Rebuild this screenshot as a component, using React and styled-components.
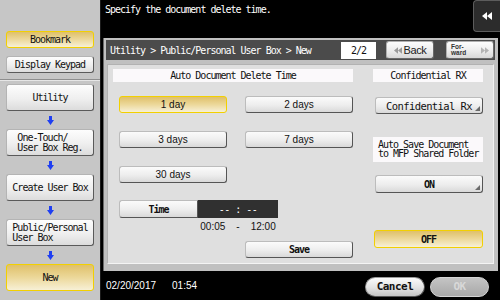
import React from "react";
import styled, { createGlobalStyle, css } from "styled-components";

const MONO = `"DejaVu Sans Mono", "Liberation Mono", monospace`;
const SANS = `"Liberation Sans", Arial, sans-serif`;

const GlobalStyle = createGlobalStyle`
  * { box-sizing: border-box; }
  html, body { margin: 0; padding: 0; background: #000; }
  body { width: 500px; height: 300px; overflow: hidden; font-family: ${MONO}; }
  button { font: inherit; padding: 0; margin: 0; cursor: pointer; }
`;

const Screen = styled.div`
  display: flex;
  width: 500px;
  height: 300px;
  background: #000;
  overflow: hidden;
`;

const Sidebar = styled.aside`
  flex: none;
  width: 101px;
  background: #c6c6c6;
  border-right: 1px solid #1c1c1c;
  display: flex;
  flex-direction: column;
`;

const SideTop = styled.div`
  height: 80px;
  padding: 31px 6px 0 6px;
  display: flex;
  flex-direction: column;
  gap: 8px;
  border-bottom: 1px solid #8e8e8e;
  box-shadow: 0 1px 0 #e6e6e6;
`;

const SideNav = styled.div`
  padding: 4px 6px 0 6px;
  display: flex;
  flex-direction: column;
`;

const yellow = css`
  border: 1.5px solid #f2d000;
  background: linear-gradient(#dfc06a, #ecd89a 50%, #f7f0d6);
`;

const SideButton = styled.button`
  flex: none;
  width: 100%;
  height: ${(p) => p.$h}px;
  display: flex;
  align-items: center;
  justify-content: center;
  font-family: ${MONO};
  font-size: 10px;
  letter-spacing: -1px;
  line-height: 10px;
  color: #111;
  border-radius: 3px;
  border: 1px solid #b4b4b4;
  border-right-color: #5a5a5a;
  border-bottom-color: #5a5a5a;
  background: linear-gradient(#fdfdfd, #efefef 55%, #dcdcdc);
  ${(p) => p.$active && yellow}
`;

const Label = styled.span`
  text-align: left;
  white-space: pre-line;
`;

const ArrowSlot = styled.div`
  height: 18px;
  flex: none;
  display: flex;
  align-items: center;
  justify-content: center;
`;

const Main = styled.main`
  flex: 1;
  display: flex;
  flex-direction: column;
  min-width: 0;
`;

const TopBar = styled.div`
  height: 38px;
  flex: none;
  display: flex;
  justify-content: space-between;
  align-items: flex-start;
`;

const Message = styled.div`
  color: #fff;
  font-size: 10px;
  letter-spacing: -1px;
  padding: 4px 0 0 4px;
`;

const CornerButton = styled.button`
  width: 27px;
  height: 32px;
  background: #2c2c2c;
  border: 1px solid #5c5c5c;
  border-right: none;
  border-radius: 4px 0 0 4px;
  display: flex;
  align-items: center;
  justify-content: center;
`;

const Panel = styled.section`
  flex: none;
  height: 233px;
  width: 395px;
  margin-left: 2px;
  background: #c0c0c0;
  border-left: 1px solid #6a6a6a;
  padding: 2px 3px 2px 2px;
  display: flex;
  flex-direction: column;
`;

const Header = styled.div`
  height: 20px;
  flex: none;
  background: #4b4b4b;
  display: flex;
  align-items: center;
  padding: 0 1px 0 4px;
`;

const PathText = styled.div`
  flex: 1;
  color: #fff;
  font-size: 10px;
  letter-spacing: -1px;
`;

const PageBox = styled.div`
  width: 35px;
  height: 17px;
  background: #fff;
  margin-right: 10px;
  display: flex;
  align-items: center;
  justify-content: center;
  font-size: 10px;
  letter-spacing: -1px;
  color: #111;
`;

const NavButton = styled.button`
  width: 48px;
  height: 18px;
  margin-left: ${(p) => p.$ml || 0}px;
  border-radius: 3px;
  border: 1px solid #b0b0b0;
  border-right-color: #6a6a6a;
  border-bottom-color: #6a6a6a;
  background: linear-gradient(#fdfdfd, #ececec 55%, #d8d8d8);
  display: flex;
  align-items: center;
  justify-content: ${(p) => p.$justify || "center"};
  gap: 2px;
  padding: 0 4px;
`;

const BackText = styled.span`
  font-family: ${SANS};
  font-size: 11px;
  letter-spacing: -0.4px;
  color: #222;
`;

const FwdText = styled.span`
  font-family: ${SANS};
  font-size: 6.5px;
  font-weight: bold;
  line-height: 6px;
  color: #333;
  white-space: pre-line;
  text-align: left;
`;

const Body = styled.div`
  flex: 1;
  display: flex;
  padding: 4px 1px 5px 1px;
`;

const Inner = styled.div`
  flex: 1;
  background: #dfdfdf;
  border-top: 1px solid #b2b2b2;
  border-left: 1px solid #b2b2b2;
  border-right: 1px solid #f0f0f0;
  border-bottom: 1px solid #f4f4f4;
  display: flex;
  gap: 20px;
  padding: 4px 5px 0 5px;
`;

const Column = styled.div`
  width: ${(p) => p.$w}px;
  flex: none;
  display: flex;
  flex-direction: column;
`;

const Strip = styled.div`
  height: 13px;
  flex: none;
  background: #fbf9fb;
  display: flex;
  align-items: center;
  justify-content: center;
  font-size: 10px;
  letter-spacing: -1px;
  color: #111;
`;

const DayGrid = styled.div`
  margin-top: 14px;
  padding-left: 6px;
  display: grid;
  grid-template-columns: 108px 108px;
  column-gap: 18px;
  row-gap: 18px;
`;

const PanelButton = styled.button`
  position: relative;
  width: ${(p) => p.$w || 108}px;
  height: ${(p) => p.$h || 17}px;
  flex: none;
  margin-top: ${(p) => p.$mt || 0}px;
  margin-left: ${(p) => p.$ml || 0}px;
  border-radius: ${(p) => p.$radius || "3px"};
  border: 1px solid #bcbcbc;
  border-right-color: #555;
  border-bottom-color: #555;
  background: linear-gradient(#fbfbfb, #ededed 55%, #d9d9d9);
  display: flex;
  align-items: center;
  justify-content: center;
  color: #111;
  ${(p) =>
    p.$font === "sans"
      ? css`
          font-family: ${SANS};
          font-size: 10px;
        `
      : p.$font === "bold"
      ? css`
          font-family: ${MONO};
          font-size: 10px;
          font-weight: bold;
          letter-spacing: -1px;
        `
      : css`
          font-family: ${MONO};
          font-size: 10.5px;
          letter-spacing: -0.6px;
        `}
  ${(p) => p.$active && yellow}
  ${(p) =>
    p.$corner &&
    css`
      &::after {
        content: "";
        position: absolute;
        right: 2px;
        bottom: 2px;
        border-style: solid;
        border-width: 0 0 5px 5px;
        border-color: transparent transparent #6a6a6a transparent;
      }
    `}
`;

const TimeRow = styled.div`
  margin-top: 17px;
  padding-left: 6px;
  display: flex;
`;

const TimeDisplay = styled.div`
  width: 80px;
  height: 18px;
  background: #303030;
  color: #fff;
  font-size: 10px;
  letter-spacing: -0.5px;
  display: flex;
  align-items: center;
  justify-content: center;
  white-space: pre;
`;

const RangeRow = styled.div`
  margin: 4px 0 0 85px;
  width: 80px;
  height: 9px;
  display: flex;
  justify-content: center;
  align-items: center;
  gap: 11px;
  font-family: ${SANS};
  font-size: 10px;
  color: #111;
`;

const SaveRow = styled.div`
  margin-top: 10px;
  display: flex;
  justify-content: flex-end;
`;

const InfoBox = styled.div`
  margin-top: 23px;
  height: 25px;
  flex: none;
  background: #fbf9fb;
  padding: 3px 0 0 5px;
  font-size: 10px;
  letter-spacing: -1px;
  line-height: 9px;
  color: #111;
  white-space: pre;
  overflow: hidden;
`;

const BottomBar = styled.footer`
  flex: 1;
  display: flex;
  align-items: center;
  padding: 0 11px 0 5px;
  color: #fff;
  font-family: ${SANS};
  font-size: 10px;
`;

const DateText = styled.span`
  margin-right: 16px;
`;

const Pills = styled.div`
  margin-left: auto;
  display: flex;
  gap: 5px;
  padding-top: 2px;
`;

const Pill = styled.button`
  width: ${(p) => p.$w}px;
  height: 20px;
  border-radius: 10px;
  font-family: ${MONO};
  font-size: 11px;
  font-weight: bold;
  letter-spacing: -0.5px;
  display: flex;
  align-items: center;
  justify-content: center;
  ${(p) =>
    p.disabled
      ? css`
          background: linear-gradient(#c4c4c4, #a8a8a8);
          border: 1px solid #d4d4d4;
          color: #d8d8d8;
        `
      : css`
          background: linear-gradient(#fbfbfb, #e2e2e2 55%, #c4c4c4);
          border: 1px solid #9a9a9a;
          border-right-color: #555;
          border-bottom-color: #555;
          color: #111;
        `}
`;

const DownArrow = () => (
  <svg width="7" height="9" viewBox="0 0 7 9">
    <path d="M2 0h3v4h2L3.5 9 0 4h2z" fill="#1f3ff2" />
  </svg>
);

const DoubleLeft = ({ color, w = 10, h = 8 }) => (
  <svg width={w} height={h} viewBox="0 0 10 8">
    <path d="M5 0v8L0 4z M10 0v8L5 4z" fill={color} />
  </svg>
);

const DoubleRight = ({ color, w = 8, h = 7 }) => (
  <svg width={w} height={h} viewBox="0 0 10 8">
    <path d="M0 0v8l5-4z M5 0v8l5-4z" fill={color} />
  </svg>
);

const navItems = [
  { label: "Utility" },
  { label: "One-Touch/\nUser Box Reg." },
  { label: "Create User Box" },
  { label: "Public/Personal\nUser Box" },
  { label: "New", active: true },
];

export default function App() {
  return (
    <>
      <GlobalStyle />
      <Screen>
        <Sidebar>
          <SideTop>
            <SideButton $h={17} $active>
              Bookmark
            </SideButton>
            <SideButton $h={17}>Display Keypad</SideButton>
          </SideTop>
          <SideNav>
            {navItems.map((it, i) => (
              <React.Fragment key={it.label}>
                {i > 0 && (
                  <ArrowSlot>
                    <DownArrow />
                  </ArrowSlot>
                )}
                <SideButton $h={27} $active={it.active}>
                  <Label>{it.label}</Label>
                </SideButton>
              </React.Fragment>
            ))}
          </SideNav>
        </Sidebar>
        <Main>
          <TopBar>
            <Message>Specify the document delete time.</Message>
            <CornerButton>
              <DoubleLeft color="#fff" w={10} h={8} />
            </CornerButton>
          </TopBar>
          <Panel>
            <Header>
              <PathText>Utility &gt; Public/Personal User Box &gt; New</PathText>
              <PageBox>2/2</PageBox>
              <NavButton>
                <DoubleLeft color="#9a9a9a" w={8} h={7} />
                <BackText>Back</BackText>
              </NavButton>
              <NavButton $ml={12} $justify="space-between">
                <FwdText>{"For-\nward"}</FwdText>
                <DoubleRight color="#b4b4b4" />
              </NavButton>
            </Header>
            <Body>
              <Inner>
                <Column $w={240}>
                  <Strip>Auto Document Delete Time</Strip>
                  <DayGrid>
                    <PanelButton $font="sans" $active>
                      1 day
                    </PanelButton>
                    <PanelButton $font="sans">2 days</PanelButton>
                    <PanelButton $font="sans">3 days</PanelButton>
                    <PanelButton $font="sans">7 days</PanelButton>
                    <PanelButton $font="sans">30 days</PanelButton>
                  </DayGrid>
                  <TimeRow>
                    <PanelButton $font="bold" $w={79} $h={18} $radius="3px 0 0 3px">
                      Time
                    </PanelButton>
                    <TimeDisplay>{"-- : --"}</TimeDisplay>
                  </TimeRow>
                  <RangeRow>
                    <span>00:05</span>
                    <span>-</span>
                    <span>12:00</span>
                  </RangeRow>
                  <SaveRow>
                    <PanelButton $font="bold">Save</PanelButton>
                  </SaveRow>
                </Column>
                <Column $w={110}>
                  <Strip>Confidential RX</Strip>
                  <PanelButton $mt={15} $ml={2} $corner>
                    Confidential Rx
                  </PanelButton>
                  <InfoBox>{"Auto Save Document\nto MFP Shared Folder"}</InfoBox>
                  <PanelButton $font="bold" $mt={13} $ml={2} $h={18} $corner>
                    ON
                  </PanelButton>
                  <PanelButton $font="bold" $mt={37} $ml={1} $w={109} $h={18} $active>
                    OFF
                  </PanelButton>
                </Column>
              </Inner>
            </Body>
          </Panel>
          <BottomBar>
            <DateText>02/20/2017</DateText>
            <span>01:54</span>
            <Pills>
              <Pill $w={60}>Cancel</Pill>
              <Pill $w={59} disabled>
                OK
              </Pill>
            </Pills>
          </BottomBar>
        </Main>
      </Screen>
    </>
  );
}
